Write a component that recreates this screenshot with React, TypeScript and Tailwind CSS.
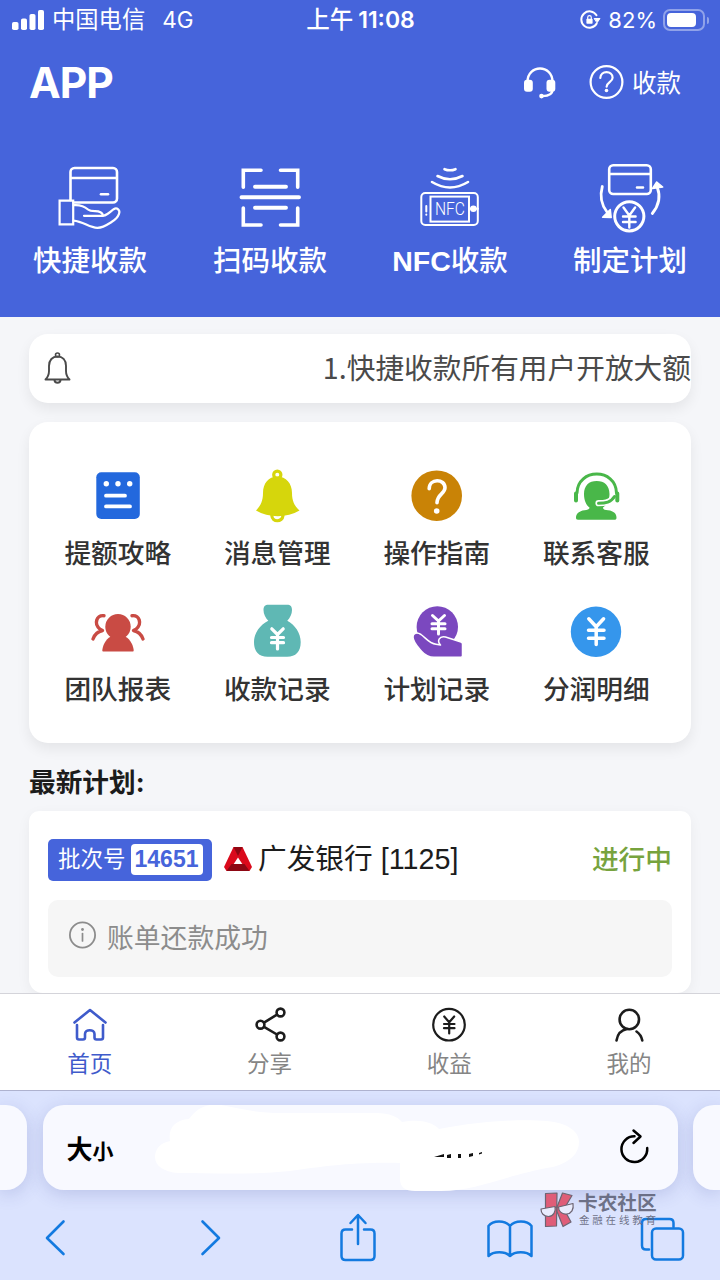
import type { ReactNode } from 'react'

// ─── Iconos ──────────────────────────────────────────────────────────────────

function Icon({ size, className, children }: { size: number; className?: string; children: ReactNode }) {
  return (
    <svg
      width={size}
      height={size}
      viewBox={`0 0 ${size} ${size}`}
      fill="none"
      stroke="currentColor"
      strokeWidth="2.6"
      strokeLinecap="round"
      strokeLinejoin="round"
      className={className}
    >
      {children}
    </svg>
  )
}

function CardHandIcon() {
  return (
    <Icon size={72}>
      <path d="M16.500 38V10a4 4 0 0 1 4-4h38.500a4 4 0 0 1 4 4v26.500a4 4 0 0 1-4 4H19.500M16.500 16H63" />
      <path d="M47 32.200h7" />
      <path d="M5.600 38.600h13.600v23.800H5.600z" strokeWidth="2.200" strokeLinejoin="miter" />
      <path
        d="M19.500 43.200c7-.6 11 1.200 14.500 4.300 2 1.700 4 1.700 7 1.700 5 0 7.500 1 8 4.600M30 53.800h19.500c4-1 7-4.500 10.200-6.600 3.300-2 6.800.8 5.300 4.600-1 3-4 6-7.500 8.200-4 2.500-8 5.600-14 5.800-8 .2-14-6.500-24-7.200"
        strokeWidth="2.200"
      />
    </Icon>
  )
}

function ScanIcon() {
  return (
    <Icon size={72}>
      <path
        d="M27 8.300H9.300v17M46.500 8.300h17.200v17M9.300 46v17H27M63.700 46v17H46.500"
        strokeWidth="3.600"
        strokeLinejoin="miter"
      />
      <path d="M7.500 35.300h57.500M21 24.700h31M21 45.700h31" strokeWidth="3.900" />
    </Icon>
  )
}

function NfcIcon() {
  return (
    <Icon size={72}>
      <path d="M30.500 7.200q5.500 2.200 11 0M23.500 14q12.500 6.500 25 0M18 20q18 11 36 0" strokeWidth="2.600" />
      <rect x="7.300" y="31" width="56.500" height="32" rx="4" strokeWidth="2" />
      <rect x="16.500" y="34.600" width="38.500" height="25" strokeWidth="2" strokeLinejoin="miter" />
      <path d="M12.300 44v5.500M12.300 52.500v.2" strokeWidth="2" />
      <path d="M55 46.700h9" strokeWidth="2" />
      <circle cx="59.400" cy="46.700" r="3.300" fill="currentColor" stroke="none" />
      <text
        x="36"
        y="53.200"
        textAnchor="middle"
        textLength="30"
        lengthAdjust="spacingAndGlyphs"
        fill="currentColor"
        stroke="none"
        className="font-['Roboto','Liberation_Sans',sans-serif] text-[18px] font-light"
      >
        NFC
      </text>
    </Icon>
  )
}

function PlanIcon() {
  return (
    <Icon size={72}>
      <rect x="15.200" y="3.200" width="41.600" height="28.800" rx="4" />
      <path d="M15.500 12h41M43 25.500h6" />
      <path d="M8.300 24.500c-2.800 10-1.300 18 5 26M58.300 51.500c6.500-8 8.500-17 5-26" strokeWidth="2.800" />
      <path d="M16.300 47.500l.9 8-8.600-.2zM58.500 26.500l4.200-6.500 6 5z" fill="currentColor" strokeWidth="1.500" />
      <circle cx="35.300" cy="54.300" r="14.600" strokeWidth="3" />
      <path d="M29.500 45.500l5.800 8 5.800-8M35.300 53.500v12M29 54.500h12.600M29 60h12.600" strokeWidth="2.400" />
    </Icon>
  )
}

function GuideDocIcon() {
  return (
    <Icon size={60} className="text-[#2368dd]">
      <rect x="8.300" y="7.300" width="43.500" height="46.700" rx="5" fill="currentColor" stroke="none" />
      <g fill="#fff" stroke="none">
        <circle cx="18.300" cy="18.700" r="2.700" />
        <circle cx="30" cy="18.700" r="2.700" />
        <circle cx="41.700" cy="18.700" r="2.700" />
      </g>
      <path d="M18 30.700h19M18 41.400h24" stroke="#fff" strokeWidth="3.800" />
    </Icon>
  )
}

function BellSolidIcon() {
  return (
    <Icon size={60} className="text-[#d6d60c]">
      <circle cx="30.300" cy="9.800" r="3.600" strokeWidth="3.200" />
      <path
        d="M16 28c0-9.500 5.500-16.500 14.300-16.500S45 18.500 45 28c0 8 2.500 13 7.500 17.500-12.500 7.500-31 7.500-43.500 0 4.500-4.500 7-9.500 7-17.500z"
        fill="currentColor"
        stroke="none"
      />
      <path d="M24.800 50.500c.5 7 10.500 7 11.200 0" strokeWidth="3.200" />
    </Icon>
  )
}

function QuestionSolidIcon() {
  return (
    <Icon size={60} className="text-[#c98306]">
      <circle cx="29.700" cy="30.700" r="25.300" fill="currentColor" stroke="none" />
      <path
        d="M22.200 23.800c0-10.800 15.800-10.300 15.800-1 0 6-8 6.500-8 15"
        stroke="#fff"
        strokeWidth="3.600"
      />
      <circle cx="29.700" cy="46" r="2.800" fill="#fff" stroke="none" />
    </Icon>
  )
}

function AgentIcon() {
  return (
    <Icon size={60} className="text-[#49b749]">
      <path
        d="M18 29c0-8.500 5-13 12.700-13s12.800 4.500 12.800 13c0 6-3 11-6.500 13.500 0 2 2 2.500 5 2.800 6 .7 8.500 3.500 8.500 7.500 0 1.500-.8 2-2 2H12c-1.500 0-2-.7-2-2 0-4 3-6.800 8.500-7.500 3-.3 5-1 5-2.800C20 40 18 35 18 29z"
        fill="currentColor"
        stroke="none"
      />
      <path d="M46.500 34c-4 4-8 4.200-14 4.200" stroke="#fff" strokeWidth="6.200" />
      <path d="M48.500 31.500c-3.500 6-9 6.700-16 6.700" strokeWidth="3" />
      <path d="M11 28C11.500 2.800 50 2.800 50.500 28" strokeWidth="3" />
      <path d="M10 28.500v7M51.300 28.500v7" strokeWidth="4" />
    </Icon>
  )
}

function TeamIcon() {
  return (
    <Icon size={60} className="text-[#c94b44]">
      <circle cx="30" cy="25.700" r="12.700" fill="currentColor" stroke="none" />
      <path
        d="M14.300 49c1-7 5-12.500 10-14h11.400c5 1.500 9 7 10 14 .1 1-.4 1.500-1.300 1.500H15.600c-.9 0-1.400-.5-1.300-1.500z"
        fill="currentColor"
        stroke="none"
      />
      <path
        d="M16 14.700c-7.500-.7-10.500 8-4 13.500l2.500 1.300c-5 1.200-8 4.300-9.500 8.500M44 14.700c7.500-.7 10.500 8 4 13.500l-2.500 1.300c5 1.200 8 4.300 9.500 8.500"
        strokeWidth="3.400"
      />
    </Icon>
  )
}

function MoneyBagIcon() {
  return (
    <Icon size={60} className="text-[#5fb8b4]">
      <path
        d="M21.300 19.800C18.500 17 16.500 13 16.500 9c0-3.500 1.500-5.200 5-5.200h18.500c3.500 0 5 1.700 5 5.200 0 4-2 8-4.700 10.800C48 24 53.700 32 53.700 41c0 10-5 14.700-13.500 14.700H20.500C12 55.700 7 51 7 41c0-9 6-17 14.300-21.200z"
        fill="currentColor"
        stroke="none"
      />
      <path
        d="M24.800 27.800l5.700 5.700 5.700-5.700M30.500 34v14M24.500 36.500h12M24.500 41.700h12"
        stroke="#fff"
        strokeWidth="3.200"
      />
    </Icon>
  )
}

function CoinHandIcon() {
  return (
    <Icon size={60} className="text-[#7b48bf]">
      <circle cx="30.300" cy="25.900" r="20.700" fill="currentColor" stroke="none" />
      <path
        d="M25.500 14.500l6 5.500 6-5.500M31.500 20.500v12.500M25 22.800h13M25 27.800h13"
        stroke="#fff"
        strokeWidth="3"
      />
      <path
        d="M6 36c0-4 4-5 8-2.500 5 3.500 8 9 15 9.700l4.500.8c-4-4-1-9.500 5-8L54 41c1 .4 1.500 1 1.500 2v11.500c0 1-.6 1.800-1.600 1.800H27c-5 0-9-2-12.500-6C10 45 6 41 6 36z"
        fill="currentColor"
        stroke="#fff"
        strokeWidth="1.500"
      />
    </Icon>
  )
}

function CoinSolidIcon() {
  return (
    <Icon size={60} className="text-[#3596ec]">
      <circle cx="30" cy="30.700" r="25.200" fill="currentColor" stroke="none" />
      <path
        d="M22.800 17.800l7.400 8 7.400-8M30.200 26.500v17M22.500 29.200h15.500M22.500 37.200h15.500"
        stroke="#fff"
        strokeWidth="3.500"
      />
    </Icon>
  )
}

function SignalIcon() {
  return (
    <svg width="33" height="20" viewBox="0 0 33 20" fill="#fff">
      <rect x="0" y="12" width="6.500" height="8" rx="1.800" />
      <rect x="9" y="8.500" width="6" height="11.500" rx="1.800" />
      <rect x="17.500" y="4" width="6" height="16" rx="1.800" />
      <rect x="26" y="0" width="6" height="20" rx="1.800" />
    </svg>
  )
}

// Logo del banco: triángulo rojo con facetas
function BankLogo() {
  return (
    <svg width="28" height="26" viewBox="0 0 28 26">
      <path d="M9.500 1h9l9.500 20-2.500 4h-23L0 21z" fill="#da0a1c" />
      <path d="M9.500 1h9L14 10z" fill="#8f0712" />
      <path d="M7.500 18h13l5 7h-23z" fill="#8d0814" />
      <path d="M14 11.500l4.300 6.500H9.700z" fill="#fff" />
    </svg>
  )
}

// ─── Datos ───────────────────────────────────────────────────────────────────

const QUICK_ACTIONS = [
  { label: '快捷收款', icon: <CardHandIcon /> },
  { label: '扫码收款', icon: <ScanIcon /> },
  { prefix: 'NFC', label: '收款', icon: <NfcIcon /> },
  { label: '制定计划', icon: <PlanIcon /> },
]

const MENU = [
  { label: '提额攻略', icon: <GuideDocIcon /> },
  { label: '消息管理', icon: <BellSolidIcon /> },
  { label: '操作指南', icon: <QuestionSolidIcon /> },
  { label: '联系客服', icon: <AgentIcon /> },
  { label: '团队报表', icon: <TeamIcon /> },
  { label: '收款记录', icon: <MoneyBagIcon /> },
  { label: '计划记录', icon: <CoinHandIcon /> },
  { label: '分润明细', icon: <CoinSolidIcon /> },
]

const TABS = [
  {
    label: '首页',
    active: true,
    icon: (
      <Icon size={40}>
        <path d="M4.500 17.500L20 5l15.500 12.500M7 20v12.500c0 1.300.7 2 2 2h4c1.300 0 2-.7 2-2v-3.500c0-5 9.500-5 9.500 0v3.500c0 1.300.7 2 2 2h4.500c1.300 0 2-.7 2-2V20" />
      </Icon>
    ),
  },
  {
    label: '分享',
    icon: (
      <Icon size={40}>
        <circle cx="30.500" cy="7.500" r="3.900" />
        <circle cx="10.500" cy="19.700" r="3.900" />
        <circle cx="30.500" cy="31.500" r="3.900" />
        <path d="M14 17.600l13-8M14 21.800l13 7.700" />
      </Icon>
    ),
  },
  {
    label: '收益',
    icon: (
      <Icon size={40}>
        <circle cx="20" cy="19.700" r="15.800" strokeWidth="2.200" />
        <path d="M15.200 11.500l5 5.800 5-5.800M20.200 17.500v11M15 19h10.500M15 23.200h10.500" strokeWidth="2.200" />
      </Icon>
    ),
  },
  {
    label: '我的',
    icon: (
      <Icon size={40}>
        <circle cx="20.300" cy="14.500" r="9.700" />
        <path d="M7.500 35.500c1-6 4.500-10.500 10.500-11.500M27.500 26.500c3 2 5 5 5.800 9" />
      </Icon>
    ),
  },
]

// ─── Secciones ───────────────────────────────────────────────────────────────

function StatusBar() {
  return (
    <div className="grid h-10 grid-cols-[1fr_auto_1fr] items-center pr-[11px] pl-3 text-[22px] leading-none">
      <div className="flex items-center">
        <SignalIcon />
        <span className="ml-[7px] text-[23.300px]">中国电信</span>
        <span className="ml-[17px] text-[22.500px]">4G</span>
      </div>
      <div className="flex items-center gap-[5px] font-semibold">
        <span className="text-[23.500px] font-medium">上午</span>
        <span className="text-[23px]">11:08</span>
      </div>
      <div className="flex items-center justify-end">
        <Icon size={22}>
          <path d="M17.500 6.200a8.200 8.200 0 1 0 .2 8.300" strokeWidth="2" />
          <path d="M15.500 9.500h5.500l-2.800 4z" fill="currentColor" strokeWidth="1" />
          <rect x="7.400" y="9.700" width="6.200" height="5" rx=".8" fill="currentColor" stroke="none" />
          <path d="M8.700 10V8.500a1.800 1.800 0 0 1 3.600 0V10" strokeWidth="1.200" />
        </Icon>
        <span className="ml-[7px]">82%</span>
        <div className="ml-1.5 h-[22px] w-[42px] rounded-[7px] border-2 border-white/40 p-0.5">
          <div className="h-full w-[29px] rounded-[4px] bg-white" />
        </div>
        <div className="ml-[2px] h-[7px] w-[2px] rounded-r bg-white/40" />
      </div>
    </div>
  )
}

function Header() {
  return (
    <header className="h-[317px] shrink-0 bg-[#4664db] text-white">
      <StatusBar />
      <div className="flex h-[86px] items-center justify-between pr-[39px] pl-[29px]">
        <h1 className="font-['Inter',sans-serif] text-[42.500px] leading-none font-bold tracking-[-1px]">APP</h1>
        <div className="flex items-center">
          <Icon size={36}>
            <path d="M6.500 17C6.500-1 31.500-1 31.500 17M31.500 25c0 4-3 5.800-10 6.100" strokeWidth="2.400" />
            <rect x="3" y="14.700" width="8.800" height="12" rx="3" fill="currentColor" stroke="none" />
            <rect x="25.500" y="14.700" width="8.800" height="12" rx="3" fill="currentColor" stroke="none" />
            <circle cx="20.500" cy="31.100" r="2.300" fill="currentColor" stroke="none" />
          </Icon>
          <Icon size={36} className="ml-[31px]">
            <circle cx="18.500" cy="17" r="15.900" strokeWidth="2.200" />
            <path d="M12.300 13c.3-8 12.300-7.500 12.300-.3 0 4.300-6 4.600-6 9" strokeWidth="2.200" />
            <circle cx="18.500" cy="25.500" r="1.800" fill="currentColor" stroke="none" />
          </Icon>
          <span className="ml-2 text-[24.500px] leading-none">收款</span>
        </div>
      </div>
      <nav className="grid grid-cols-4 pt-9">
        {QUICK_ACTIONS.map(({ prefix, label, icon }) => (
          <div key={label} className="flex flex-col items-center">
            {icon}
            <span className="mt-2.5 text-[28.500px] leading-[34px] font-medium">
              {prefix && <span className="font-['Liberation_Sans',sans-serif] text-[28.500px] font-bold">{prefix}</span>}
              {label}
            </span>
          </div>
        ))}
      </nav>
    </header>
  )
}

function NoticeBar() {
  return (
    <div className="flex h-[69px] items-center justify-between overflow-hidden rounded-[19px] bg-white pl-2.5 text-[#4a4a4a] shadow-[0_6px_14px_rgba(0,0,0,0.07)]">
      <Icon size={36}>
        <circle cx="18.500" cy="4" r="2" strokeWidth="1.600" />
        <path
          d="M10 15c0-6 3.500-9.500 8.500-9.500S27 9 27 15v5c0 3.500 1 6 3.500 8.500h-24C9 26 10 23.500 10 20zM15.500 29.500c.5 3 5.500 3 6 0"
          strokeWidth="1.900"
        />
      </Icon>
      <p className="-mt-0.5 font-['Noto_Sans_CJK_SC',sans-serif] text-[28.700px] leading-none whitespace-nowrap">
        1.快捷收款所有用户开放大额
      </p>
    </div>
  )
}

function MenuCard() {
  return (
    <div className="mt-[19px] grid h-[321px] grid-cols-4 content-start gap-y-[31px] rounded-[19px] bg-white pt-[43px] pr-[15px] pl-[9px] shadow-[0_6px_14px_rgba(0,0,0,0.07)]">
      {MENU.map(({ label, icon }) => (
        <div key={label} className="flex flex-col items-center">
          {icon}
          <span className="mt-[11px] text-[26.700px] leading-[34px] font-medium text-[#333]">{label}</span>
        </div>
      ))}
    </div>
  )
}

function PlanCard() {
  return (
    <div className="mt-3 flex-1 rounded-t-[10px] rounded-b-[14px] bg-white px-[19px] pt-[27px] shadow-[0_4px_14px_rgba(0,0,0,0.05)]">
      <div className="flex h-[43px] items-center">
        <div className="flex h-[42px] w-[164px] shrink-0 items-center rounded-[5px] bg-[#4664db] pl-2.5">
          <span className="text-[22.500px] leading-none text-white">批次号</span>
          <span className="ml-[5px] flex h-[31px] w-[72px] items-center justify-center rounded-[4px] bg-white font-['Liberation_Sans',sans-serif] text-[23px] font-bold text-[#4664db]">
            14651
          </span>
        </div>
        <div className="ml-3 flex items-center">
          <BankLogo />
          <span className="ml-1.5 font-['Liberation_Sans','Noto_Sans_CJK_SC',sans-serif] text-[28.700px] leading-none whitespace-nowrap text-[#1c1c1c]">
            广发银行 [1125]
          </span>
        </div>
        <span className="ml-auto text-[26.700px] leading-none font-medium text-[#77a33e]">进行中</span>
      </div>
      <div className="mt-[19px] flex h-[77px] items-center rounded-[10px] bg-[#f6f6f6] pl-5 text-[#8c8c8c]">
        <Icon size={30} className="-mt-2">
          <circle cx="14.500" cy="15" r="12.600" strokeWidth="1.800" />
          <path d="M14.500 13.500v7.500" strokeWidth="1.700" />
          <circle cx="14.500" cy="9.500" r="1.400" fill="currentColor" stroke="none" />
        </Icon>
        <span className="ml-[9px] text-[26.800px] leading-none">账单还款成功</span>
      </div>
    </div>
  )
}

function TabBar() {
  return (
    <nav className="grid h-[97px] shrink-0 grid-cols-4 border-t border-[#d4d4da] bg-white pt-[11px] pr-px">
      {TABS.map(({ label, icon, active }) => (
        <div
          key={label}
          className={active ? 'flex flex-col items-center text-[#3f5bcb]' : 'flex flex-col items-center text-[#1c1c1c]'}
        >
          {icon}
          <span className={active ? 'mt-1 text-[22.500px] leading-[30px]' : 'mt-1 text-[22.500px] leading-[30px] text-[#858585]'}>
            {label}
          </span>
        </div>
      ))}
    </nav>
  )
}

function AddressBar() {
  return (
    <div className="flex h-[85px] justify-between">
      <div className="w-[27px] rounded-r-[21px] bg-[#f8f9ff] shadow-[0_4px_18px_rgba(60,70,150,0.2)]" />
      <div className="relative flex w-[635px] items-center justify-between rounded-[21px] bg-[#f8f9ff] pr-[26px] pl-6 text-black shadow-[0_4px_18px_rgba(60,70,150,0.2)]">
        {/* Trazo blanco que tapa la dirección */}
        <svg className="absolute top-0 left-0" width="635" height="88" viewBox="0 0 635 88" fill="#fff">
          <path d="M112 52c0-8 5-14 15-16-2-12 4-21 19-22 8-11 18-16 32-14 20 4 36 8 60 8h95c14 0 22 4 26 9 18-3 30 0 37 7 42-8 80-10 108-8 20 2 32 10 32 21s-8 20-26 25c-48 8-76 24-112 24h-26c-10 0-15-4-15-12V58c-50-1-80 4-110 8-40 4-80 2-112 2-14-1-23-7-23-16z" />
          <path d="M391 52l10-3v3zM404 50l4-1v4h-4zM415 49h3v4h-3zM426 49l4-1v3l-4 1zM436 48l3-1v1.500l-3 1z" fill="#111" />
        </svg>
        <span className="mt-1 flex items-baseline leading-none font-bold">
          <span className="text-[26px]">大</span>
          <span className="text-[21px]">小</span>
        </span>
        <Icon size={36} className="-mt-1">
          <path d="M18.500 8.200A12.900 12.900 0 1 0 31.200 20M17.500 2.500l7 6-7 6.500" strokeWidth="2.500" />
        </Icon>
      </div>
      <div className="w-[27px] rounded-l-[21px] bg-[#f8f9ff] shadow-[0_4px_18px_rgba(60,70,150,0.2)]" />
    </div>
  )
}

function BrowserToolbar() {
  return (
    <div className="flex items-center justify-between pt-5 pr-[33px] pl-[29px] text-[#137ae0]">
      <Icon size={52}>
        <path d="M34.500 11.500L18 28l16.500 16" />
      </Icon>
      <Icon size={52} className="ml-[44px]">
        <path d="M18.500 11.500L35 28 18.500 44" />
      </Icon>
      <Icon size={52} className="ml-[38px]">
        <path d="M20 19.500h-6.500c-2.500 0-4 1.500-4 4V46c0 2.500 1.500 4 4 4h25c2.500 0 4-1.500 4-4V23.500c0-2.500-1.500-4-4-4H32M26 34V6M18.500 13L26 5l7.500 8" strokeWidth="2.500" />
      </Icon>
      <Icon size={52} className="ml-[40px]">
        <path d="M27 16c-5-6-17-6-21.500 0v30c5-5 16.500-5 21.500 0 5-5 16.500-5 21.500 0V16C44 10 32 10 27 16zM27 16v30" strokeWidth="2.500" />
      </Icon>
      <Icon size={52} className="ml-[42px]">
        <path d="M14 39.500h-3c-2.500 0-4-1.500-4-4V13c0-2.500 1.500-4 4-4h23.500c2.500 0 4 1.500 4 4v4" strokeWidth="2.500" />
        <rect x="17" y="18.500" width="31" height="31" rx="4" strokeWidth="2.500" />
      </Icon>
    </div>
  )
}

// Marca de agua sobre la barra del navegador
function Watermark() {
  return (
    <div className="absolute top-[1192px] left-[540px] flex items-start text-[#5a5d72]/85">
      <svg width="35" height="36" viewBox="0 0 35 36" strokeLinejoin="round">
        {/* Marca: listón y dos alas, con gafas delante */}
        <g fill="#df5d78" stroke="#6d6472" strokeWidth="1.200">
          <path d="M5.500 1.500L17 1l-.5 33-11 .5z" />
          <path d="M22.500 1l9.500 2.500-8 13.500 7 13-8 4.500-6-15V15z" />
        </g>
        <path
          d="M1 17l14-2.500c1 5-1.500 10-6.500 10S1 21 1 17zM18.500 15L33 11.500c1 6-1.500 10-6.500 10.500s-8-3-8-7zM15 15.500l3.500-.5"
          fill="#e9ecfd"
          stroke="#6d6472"
          strokeWidth="1.200"
        />
      </svg>
      <div className="ml-[3px] flex flex-col">
        <span className="text-[19.700px] leading-[22px] font-bold whitespace-nowrap">卡农社区</span>
        <span className="ml-px text-[10.500px] leading-[13px] tracking-[2.800px] whitespace-nowrap">金融在线教育</span>
      </div>
    </div>
  )
}

export default function App() {
  return (
    <div className="relative flex h-[1280px] w-[720px] flex-col overflow-hidden bg-[#f5f6f9] font-['Inter','Noto_Sans_CJK_SC',sans-serif]">
      <Header />
      <main className="flex min-h-0 flex-1 flex-col px-[29px] pt-[17px]">
        <NoticeBar />
        <MenuCard />
        <h2 className="mt-[22px] text-[26.700px] leading-[34px] font-bold text-[#1c1c1c]">最新计划:</h2>
        <PlanCard />
      </main>
      <TabBar />
      <footer className="h-[190px] shrink-0 border-t border-[#aeb2cf] bg-[#dbe3fe] pt-3.5">
        <AddressBar />
        <BrowserToolbar />
      </footer>
      <Watermark />
    </div>
  )
}
